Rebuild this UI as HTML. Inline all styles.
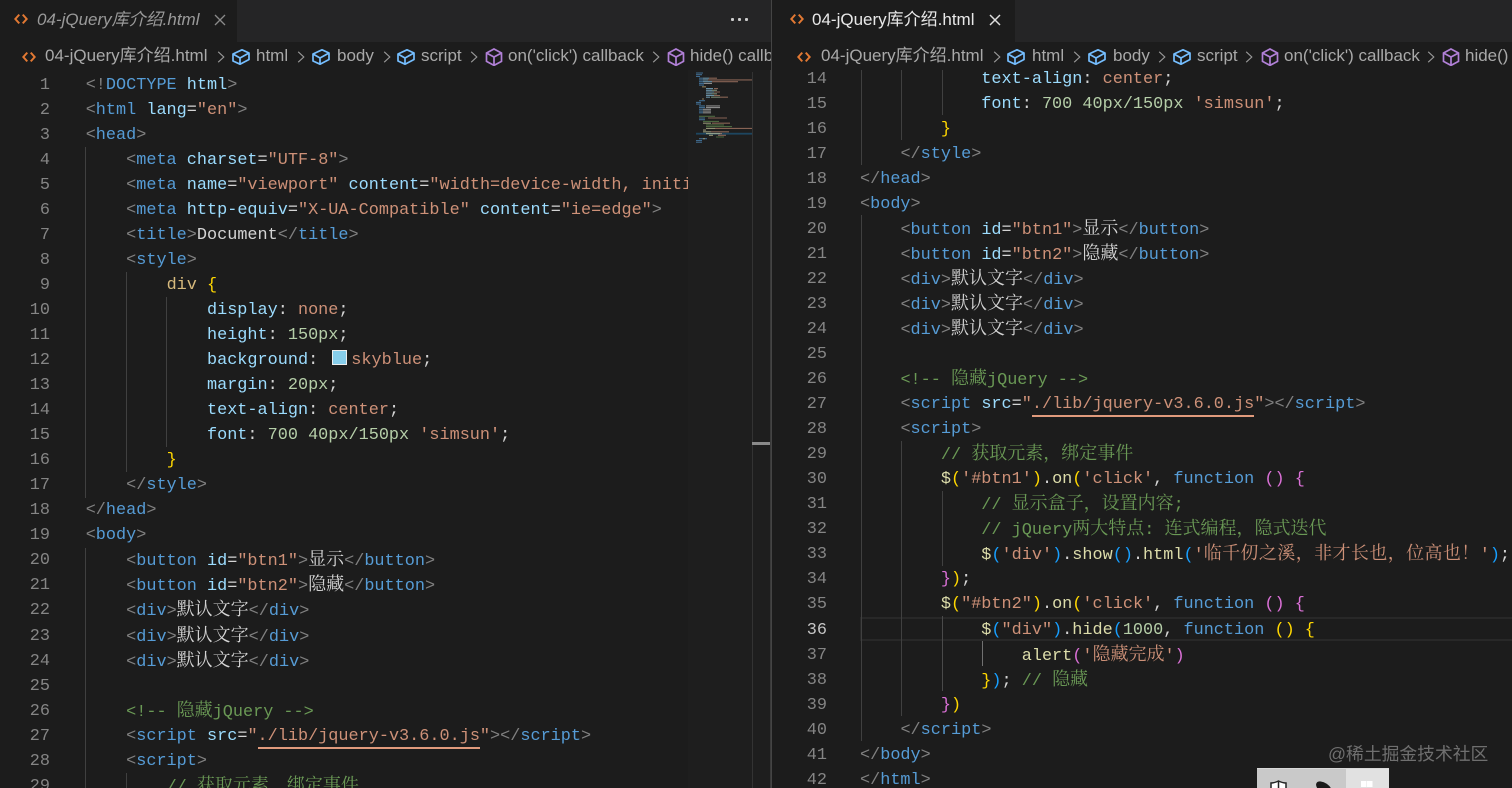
<!DOCTYPE html>
<html lang="zh"><head><meta charset="utf-8"><title>04-jQuery库介绍.html</title>
<style>
html,body{margin:0;padding:0;background:#1c1c1c}
#r{position:relative;width:1512px;height:788px;overflow:hidden;background:#1c1c1c;font-family:"Liberation Sans","Noto Sans CJK SC",sans-serif}
.abs,.bc,.tx{position:absolute}
.tabbar{position:absolute;top:0;height:42px;background:#252526}
.tab{position:absolute;top:0;left:0;height:42px;background:#1c1c1c}
.crumb{position:absolute;top:42px;height:28px;background:#1c1c1c;overflow:hidden}
.tx{white-space:nowrap;font-size:17px;line-height:28px;color:#a9a9a9;top:0}
.tabt{position:absolute;white-space:nowrap;font-size:17px;line-height:42px;top:-1px}
.code{position:absolute;overflow:hidden;font:16.85px/25.06px "Liberation Mono",monospace;color:#d4d4d4}
.code div{height:25.06px;white-space:pre}
.num{position:absolute;font:16.85px/25.06px "Liberation Mono",monospace;color:#858585;text-align:right}
.num div{height:25.06px}
.gd{position:absolute;width:1px;background:#404040}
i{font-style:normal}
.g{color:#808080}.t{color:#569cd6}.a{color:#9cdcfe}.s{color:#ce9178}.c{color:#6a9955}.f{color:#dcdcaa}.y{color:#ffd700}.p{color:#da70d6}.b{color:#179fff}.n{color:#b5cea8}.d{color:#d7ba7d}
.h{font-family:"Noto Serif CJK SC","Noto Sans CJK SC",serif;font-size:18px;line-height:20px}
.u{border-bottom:2px solid #e09a7c;padding-bottom:1px}
.sw{display:inline-block;width:13px;height:13px;background:#87ceeb;border:1px solid #eee;margin:0 4px 0 4px;vertical-align:-1px}
</style></head><body><div id="r">
<svg width="0" height="0" style="position:absolute"><defs>
<symbol id="cb" viewBox="0 0 18 18"><path d="M1 6 10 1.800 17 5v6.500L8 16.200 1 13zM1 6l7 4 9-5M8 10v6.200" fill="none" stroke="#75beff" stroke-width="1.700" stroke-linejoin="round"/></symbol>
<symbol id="cp" viewBox="0 0 18 18"><path d="M9 1 16.500 5v8.400L9 17.400 1.500 13.400V5zM1.500 5 9 9l7.500-4M9 9v8.400" fill="none" stroke="#b180d7" stroke-width="1.700"/></symbol>
<symbol id="fi" viewBox="0 0 16 16"><path d="M6 3 1.500 8 6 13M10 3l4.500 5L10 13" fill="none" stroke="#e37933" stroke-width="2.300"/></symbol>
<symbol id="ch" viewBox="0 0 10 16"><path d="M1.500 1.500 8.500 8l-7 6.500" fill="none" stroke="#9a9a9a" stroke-width="1.400"/></symbol>
</defs></svg>

<!-- left code -->
<div class="num" style="left:20px;top:72.500px;width:30px"><div>1</div><div>2</div><div>3</div><div>4</div><div>5</div><div>6</div><div>7</div><div>8</div><div>9</div><div>10</div><div>11</div><div>12</div><div>13</div><div>14</div><div>15</div><div>16</div><div>17</div><div>18</div><div>19</div><div>20</div><div>21</div><div>22</div><div>23</div><div>24</div><div>25</div><div>26</div><div>27</div><div>28</div><div>29</div></div>
<div class="gd" style="left:85px;top:147px;height:351px"></div>
<div class="gd" style="left:85px;top:548px;height:240px"></div>
<div class="gd" style="left:126px;top:272px;height:200px"></div>
<div class="gd" style="left:126px;top:773px;height:15px"></div>
<div class="gd" style="left:166px;top:297px;height:150px"></div>
<div class="code" style="left:85.700px;top:72.500px;width:603px;height:716px">
<div><i class="g">&lt;!</i><i class="t">DOCTYPE</i> <i class="a">html</i><i class="g">&gt;</i></div>
<div><i class="g">&lt;</i><i class="t">html</i> <i class="a">lang</i>=<i class="s">"en"</i><i class="g">&gt;</i></div>
<div><i class="g">&lt;</i><i class="t">head</i><i class="g">&gt;</i></div>
<div>    <i class="g">&lt;</i><i class="t">meta</i> <i class="a">charset</i>=<i class="s">"UTF-8"</i><i class="g">&gt;</i></div>
<div>    <i class="g">&lt;</i><i class="t">meta</i> <i class="a">name</i>=<i class="s">"viewport"</i> <i class="a">content</i>=<i class="s">"width=device-width, initial-scale=1.0"</i><i class="g">&gt;</i></div>
<div>    <i class="g">&lt;</i><i class="t">meta</i> <i class="a">http-equiv</i>=<i class="s">"X-UA-Compatible"</i> <i class="a">content</i>=<i class="s">"ie=edge"</i><i class="g">&gt;</i></div>
<div>    <i class="g">&lt;</i><i class="t">title</i><i class="g">&gt;</i>Document<i class="g">&lt;/</i><i class="t">title</i><i class="g">&gt;</i></div>
<div>    <i class="g">&lt;</i><i class="t">style</i><i class="g">&gt;</i></div>
<div>        <i class="d">div</i> <i class="y">{</i></div>
<div>            <i class="a">display</i>: <i class="s">none</i>;</div>
<div>            <i class="a">height</i>: <i class="n">150px</i>;</div>
<div>            <i class="a">background</i>: <i class="sw"></i><i class="s">skyblue</i>;</div>
<div>            <i class="a">margin</i>: <i class="n">20px</i>;</div>
<div>            <i class="a">text-align</i>: <i class="s">center</i>;</div>
<div>            <i class="a">font</i>: <i class="n">700 40px/150px</i> <i class="s">'simsun'</i>;</div>
<div>        <i class="y">}</i></div>
<div>    <i class="g">&lt;/</i><i class="t">style</i><i class="g">&gt;</i></div>
<div><i class="g">&lt;/</i><i class="t">head</i><i class="g">&gt;</i></div>
<div><i class="g">&lt;</i><i class="t">body</i><i class="g">&gt;</i></div>
<div>    <i class="g">&lt;</i><i class="t">button</i> <i class="a">id</i>=<i class="s">"btn1"</i><i class="g">&gt;</i><i class="h">显示</i><i class="g">&lt;/</i><i class="t">button</i><i class="g">&gt;</i></div>
<div>    <i class="g">&lt;</i><i class="t">button</i> <i class="a">id</i>=<i class="s">"btn2"</i><i class="g">&gt;</i><i class="h">隐藏</i><i class="g">&lt;/</i><i class="t">button</i><i class="g">&gt;</i></div>
<div>    <i class="g">&lt;</i><i class="t">div</i><i class="g">&gt;</i><i class="h">默认文字</i><i class="g">&lt;/</i><i class="t">div</i><i class="g">&gt;</i></div>
<div>    <i class="g">&lt;</i><i class="t">div</i><i class="g">&gt;</i><i class="h">默认文字</i><i class="g">&lt;/</i><i class="t">div</i><i class="g">&gt;</i></div>
<div>    <i class="g">&lt;</i><i class="t">div</i><i class="g">&gt;</i><i class="h">默认文字</i><i class="g">&lt;/</i><i class="t">div</i><i class="g">&gt;</i></div>
<div> </div>
<div>    <i class="c">&lt;!-- <i class="h">隐藏</i>jQuery --&gt;</i></div>
<div>    <i class="g">&lt;</i><i class="t">script</i> <i class="a">src</i>=<i class="s">"<i class="u">./lib/jquery-v3.6.0.js</i>"</i><i class="g">&gt;&lt;/</i><i class="t">script</i><i class="g">&gt;</i></div>
<div>    <i class="g">&lt;</i><i class="t">script</i><i class="g">&gt;</i></div>
<div>        <i class="c">// <i class="h">获取元素，绑定事件</i></i></div>
</div>

<!-- minimap -->
<div class="abs" style="left:688px;top:70px;width:83px;height:718px;background:#1e1e1e"></div>
<svg class="abs" style="left:688px;top:0" width="84" height="788" viewBox="688 0 84 788">
<rect x="696" y="132.800" width="56" height="1.800" fill="#1d4660"/>
<g fill="none" stroke-width="1.100" opacity=".6">
<path stroke="#569cd6" d="M696 73h7M696 74.700h6M696 76.500h4M699 78.200h4M699 79.900h4M699 81.700h4M699 83.400h5M699 85.100h5M699 100.700h6M696 102.400h5M696 104.100h5M699 105.900h6M699 107.600h6M699 109.300h4M699 111.100h4M699 112.800h4M699 118h6M699 119.700h6M696 140.500h6M696 142.200h6M699 138.700h8"/>
<path stroke="#9cdcfe" d="M703 78.200h6M703 79.900h5M703 81.700h9M706 88.600h7M706 90.300h6M706 92h10M706 93.800h6M706 95.500h9M706 97.200h4"/>
<path stroke="#ce9178" d="M709 78.200h8M708 79.900h44M712 81.700h26M714 88.600h4M714 92h6M714 95.500h6M720 97.200h8M708 118h19M712 123.200h18M715 128.400h37M711 131.800h18M714 133.600h8M718 135.300h8"/>
<path stroke="#d4d4d4" d="M704 83.400h8M706 105.900h14M706 107.600h14M703 109.300h8M703 111.100h8M703 112.800h8"/>
<path stroke="#6a9955" d="M699 116.300h16M703 121.400h16M706 124.900h18M706 126.600h26M716 137h8"/>
<path stroke="#dcdcaa" d="M703 123.200h8M706 128.400h9M703 131.800h8M706 133.600h14M709 135.300h4M703 130.100h3M703 138.700h2"/>
<path stroke="#b5cea8" d="M712 90.300h5M712 93.800h5M711 97.200h9"/>
<path stroke="#d7ba7d" d="M702 86.800h4M702 99h2"/>
</g>
<rect x="752" y="72" width="1" height="716" fill="#333"/>
<rect x="770" y="42" width="1" height="746" fill="#3a3a3a"/>
<rect x="752" y="442" width="18" height="3" fill="#8a8a8a"/>
</svg>

<!-- right code -->
<div class="num" style="left:790px;top:66.500px;width:37px"><div>14</div><div>15</div><div>16</div><div>17</div><div>18</div><div>19</div><div>20</div><div>21</div><div>22</div><div>23</div><div>24</div><div>25</div><div>26</div><div>27</div><div>28</div><div>29</div><div>30</div><div>31</div><div>32</div><div>33</div><div>34</div><div>35</div><div style="color:#c6c6c6">36</div><div>37</div><div>38</div><div>39</div><div>40</div><div>41</div><div>42</div></div>
<div class="abs" style="left:860px;top:617px;width:652px;height:24px;box-sizing:border-box;border:2px solid #282828;border-right:0"></div>
<div class="gd" style="left:861px;top:65px;height:100px"></div>
<div class="gd" style="left:861px;top:215px;height:526px"></div>
<div class="gd" style="left:901px;top:65px;height:75px"></div>
<div class="gd" style="left:901px;top:441px;height:275px"></div>
<div class="gd" style="left:942px;top:65px;height:50px"></div>
<div class="gd" style="left:942px;top:491px;height:75px"></div>
<div class="gd" style="left:942px;top:616px;height:75px;background:#4a4a4a"></div>
<div class="gd" style="left:982px;top:641px;height:25px;background:#707070"></div>
<div class="code" style="left:860px;top:66.500px;width:652px;height:722px">
<div>            <i class="a">text-align</i>: <i class="s">center</i>;</div>
<div>            <i class="a">font</i>: <i class="n">700 40px/150px</i> <i class="s">'simsun'</i>;</div>
<div>        <i class="y">}</i></div>
<div>    <i class="g">&lt;/</i><i class="t">style</i><i class="g">&gt;</i></div>
<div><i class="g">&lt;/</i><i class="t">head</i><i class="g">&gt;</i></div>
<div><i class="g">&lt;</i><i class="t">body</i><i class="g">&gt;</i></div>
<div>    <i class="g">&lt;</i><i class="t">button</i> <i class="a">id</i>=<i class="s">"btn1"</i><i class="g">&gt;</i><i class="h">显示</i><i class="g">&lt;/</i><i class="t">button</i><i class="g">&gt;</i></div>
<div>    <i class="g">&lt;</i><i class="t">button</i> <i class="a">id</i>=<i class="s">"btn2"</i><i class="g">&gt;</i><i class="h">隐藏</i><i class="g">&lt;/</i><i class="t">button</i><i class="g">&gt;</i></div>
<div>    <i class="g">&lt;</i><i class="t">div</i><i class="g">&gt;</i><i class="h">默认文字</i><i class="g">&lt;/</i><i class="t">div</i><i class="g">&gt;</i></div>
<div>    <i class="g">&lt;</i><i class="t">div</i><i class="g">&gt;</i><i class="h">默认文字</i><i class="g">&lt;/</i><i class="t">div</i><i class="g">&gt;</i></div>
<div>    <i class="g">&lt;</i><i class="t">div</i><i class="g">&gt;</i><i class="h">默认文字</i><i class="g">&lt;/</i><i class="t">div</i><i class="g">&gt;</i></div>
<div> </div>
<div>    <i class="c">&lt;!-- <i class="h">隐藏</i>jQuery --&gt;</i></div>
<div>    <i class="g">&lt;</i><i class="t">script</i> <i class="a">src</i>=<i class="s">"<i class="u">./lib/jquery-v3.6.0.js</i>"</i><i class="g">&gt;&lt;/</i><i class="t">script</i><i class="g">&gt;</i></div>
<div>    <i class="g">&lt;</i><i class="t">script</i><i class="g">&gt;</i></div>
<div>        <i class="c">// <i class="h">获取元素，绑定事件</i></i></div>
<div>        <i class="f">$</i><i class="y">(</i><i class="s">'#btn1'</i><i class="y">)</i>.<i class="f">on</i><i class="y">(</i><i class="s">'click'</i>, <i class="t">function</i> <i class="p">()</i> <i class="p">{</i></div>
<div>            <i class="c">// <i class="h">显示盒子，设置内容</i>;</i></div>
<div>            <i class="c">// jQuery<i class="h">两大特点</i>: <i class="h">连式编程，隐式迭代</i></i></div>
<div>            <i class="f">$</i><i class="b">(</i><i class="s">'div'</i><i class="b">)</i>.<i class="f">show</i><i class="b">()</i>.<i class="f">html</i><i class="b">(</i><i class="s">'<i class="h" style="letter-spacing:.4px">临千仞之溪，非才长也，位高也！</i>'</i><i class="b">)</i>;</div>
<div>        <i class="p">}</i><i class="y">)</i>;</div>
<div>        <i class="f">$</i><i class="y">(</i><i class="s">"#btn2"</i><i class="y">)</i>.<i class="f">on</i><i class="y">(</i><i class="s">'click'</i>, <i class="t">function</i> <i class="p">()</i> <i class="p">{</i></div>
<div>            <i class="f">$</i><i class="b">(</i><i class="s">"div"</i><i class="b">)</i>.<i class="f">hide</i><i class="b">(</i><i class="n">1000</i>, <i class="t">function</i> <i class="y">()</i> <i class="y">{</i></div>
<div>                <i class="f">alert</i><i class="p">(</i><i class="s">'<i class="h">隐藏完成</i>'</i><i class="p">)</i></div>
<div>            <i class="y">}</i><i class="b">)</i>; <i class="c">// <i class="h">隐藏</i></i></div>
<div>        <i class="p">}</i><i class="y">)</i></div>
<div>    <i class="g">&lt;/</i><i class="t">script</i><i class="g">&gt;</i></div>
<div><i class="g">&lt;/</i><i class="t">body</i><i class="g">&gt;</i></div>
<div><i class="g">&lt;/</i><i class="t">html</i><i class="g">&gt;</i></div>
</div>

<!-- left tabs -->
<div class="tabbar" style="left:0;width:771px">
<div class="tab" style="width:237px"></div>
<svg class="abs" style="left:14px;top:12px" width="14" height="14"><use href="#fi"/></svg>
<div class="tabt" style="left:37px;font-style:italic;color:#9a9a9a">04-jQuery库介绍.html</div>
<svg class="abs" style="left:214px;top:14px" width="12" height="12" viewBox="0 0 12 12"><path d="M1 1l10 10M11 1 1 11" stroke="#8a8a8a" stroke-width="1.300"/></svg>
<div class="abs" style="left:731px;top:18px;width:17px;height:3px;background:radial-gradient(circle at 1.500px 1.500px,#ccc 1.500px,transparent 1.600px) 0 0/7px 3px repeat-x"></div>
</div>
<!-- left breadcrumb -->
<div class="crumb" style="left:0;width:771px">
<svg class="abs" style="left:22px;top:8px" width="14" height="14"><use href="#fi"/></svg>
<div class="tx" style="left:45px">04-jQuery库介绍.html</div>
<svg class="abs" style="left:217px;top:8px" width="8" height="14"><use href="#ch"/></svg>
<svg class="abs" style="left:232px;top:6px" width="18" height="18"><use href="#cb"/></svg>
<div class="tx" style="left:256px">html</div>
<svg class="abs" style="left:297px;top:8px" width="8" height="14"><use href="#ch"/></svg>
<svg class="abs" style="left:312px;top:6px" width="18" height="18"><use href="#cb"/></svg>
<div class="tx" style="left:337px">body</div>
<svg class="abs" style="left:383px;top:8px" width="8" height="14"><use href="#ch"/></svg>
<svg class="abs" style="left:397px;top:6px" width="18" height="18"><use href="#cb"/></svg>
<div class="tx" style="left:421px">script</div>
<svg class="abs" style="left:470px;top:8px" width="8" height="14"><use href="#ch"/></svg>
<svg class="abs" style="left:485px;top:6px" width="18" height="18"><use href="#cp"/></svg>
<div class="tx" style="left:508px">on('click') callback</div>
<svg class="abs" style="left:652px;top:8px" width="8" height="14"><use href="#ch"/></svg>
<svg class="abs" style="left:667px;top:6px" width="18" height="18"><use href="#cp"/></svg>
<div class="tx" style="left:690px">hide() callback</div>
</div>
<div class="abs" style="left:771px;top:0;width:1px;height:788px;background:#444"></div>

<!-- right tabs -->
<div class="tabbar" style="left:772px;width:740px">
<div class="tab" style="width:243px"></div>
<svg class="abs" style="left:18px;top:12px" width="14" height="14"><use href="#fi"/></svg>
<div class="tabt" style="left:40px;color:#e8e8e8">04-jQuery库介绍.html</div>
<svg class="abs" style="left:217px;top:14px" width="12" height="12" viewBox="0 0 12 12"><path d="M1 1l10 10M11 1 1 11" stroke="#ddd" stroke-width="1.500"/></svg>
</div>
<!-- right breadcrumb -->
<div class="crumb" style="left:772px;width:740px">
<svg class="abs" style="left:25px;top:8px" width="14" height="14"><use href="#fi"/></svg>
<div class="tx" style="left:49px">04-jQuery库介绍.html</div>
<svg class="abs" style="left:221px;top:8px" width="8" height="14"><use href="#ch"/></svg>
<svg class="abs" style="left:235px;top:6px" width="18" height="18"><use href="#cb"/></svg>
<div class="tx" style="left:260px">html</div>
<svg class="abs" style="left:301px;top:8px" width="8" height="14"><use href="#ch"/></svg>
<svg class="abs" style="left:316px;top:6px" width="18" height="18"><use href="#cb"/></svg>
<div class="tx" style="left:341px">body</div>
<svg class="abs" style="left:386px;top:8px" width="8" height="14"><use href="#ch"/></svg>
<svg class="abs" style="left:401px;top:6px" width="18" height="18"><use href="#cb"/></svg>
<div class="tx" style="left:425px">script</div>
<svg class="abs" style="left:473px;top:8px" width="8" height="14"><use href="#ch"/></svg>
<svg class="abs" style="left:489px;top:6px" width="18" height="18"><use href="#cp"/></svg>
<div class="tx" style="left:512px">on('click') callback</div>
<svg class="abs" style="left:655px;top:8px" width="8" height="14"><use href="#ch"/></svg>
<svg class="abs" style="left:670px;top:6px" width="18" height="18"><use href="#cp"/></svg>
<div class="tx" style="left:693px">hide() callback</div>
</div>

<!-- watermark and taskbar fragment -->
<div class="abs" style="left:1328px;top:742px;font-size:17.800px;line-height:24px;color:#6f6f6f;white-space:nowrap">@稀土掘金技术社区</div>
<div class="abs" style="left:1257px;top:768px;width:89px;height:20px;background:#c9c9c9;border-top:1px solid #d8d8d8;box-sizing:border-box"></div>
<div class="abs" style="left:1346px;top:768px;width:43px;height:20px;background:#e1e1e1;border-top:1px solid #d8d8d8;box-sizing:border-box"></div>
<svg class="abs" style="left:1257px;top:768px" width="132" height="20" viewBox="0 0 132 20">
<path d="M14 15c2.500 0 5-.8 7.500-2 2.500 1.200 5 2 7.500 2v6H14z" fill="#fff" stroke="#222" stroke-width="1.500"/><path d="M21.500 13v8" stroke="#222" stroke-width="1.500"/>
<ellipse cx="67" cy="20" rx="9" ry="5" transform="rotate(35 67 20)" fill="#1a1a1a"/>
<rect x="104" y="13" width="5.500" height="6" fill="#fff"/><rect x="110" y="13" width="5.500" height="6" fill="#fff"/>
</svg>
</div></body></html>
